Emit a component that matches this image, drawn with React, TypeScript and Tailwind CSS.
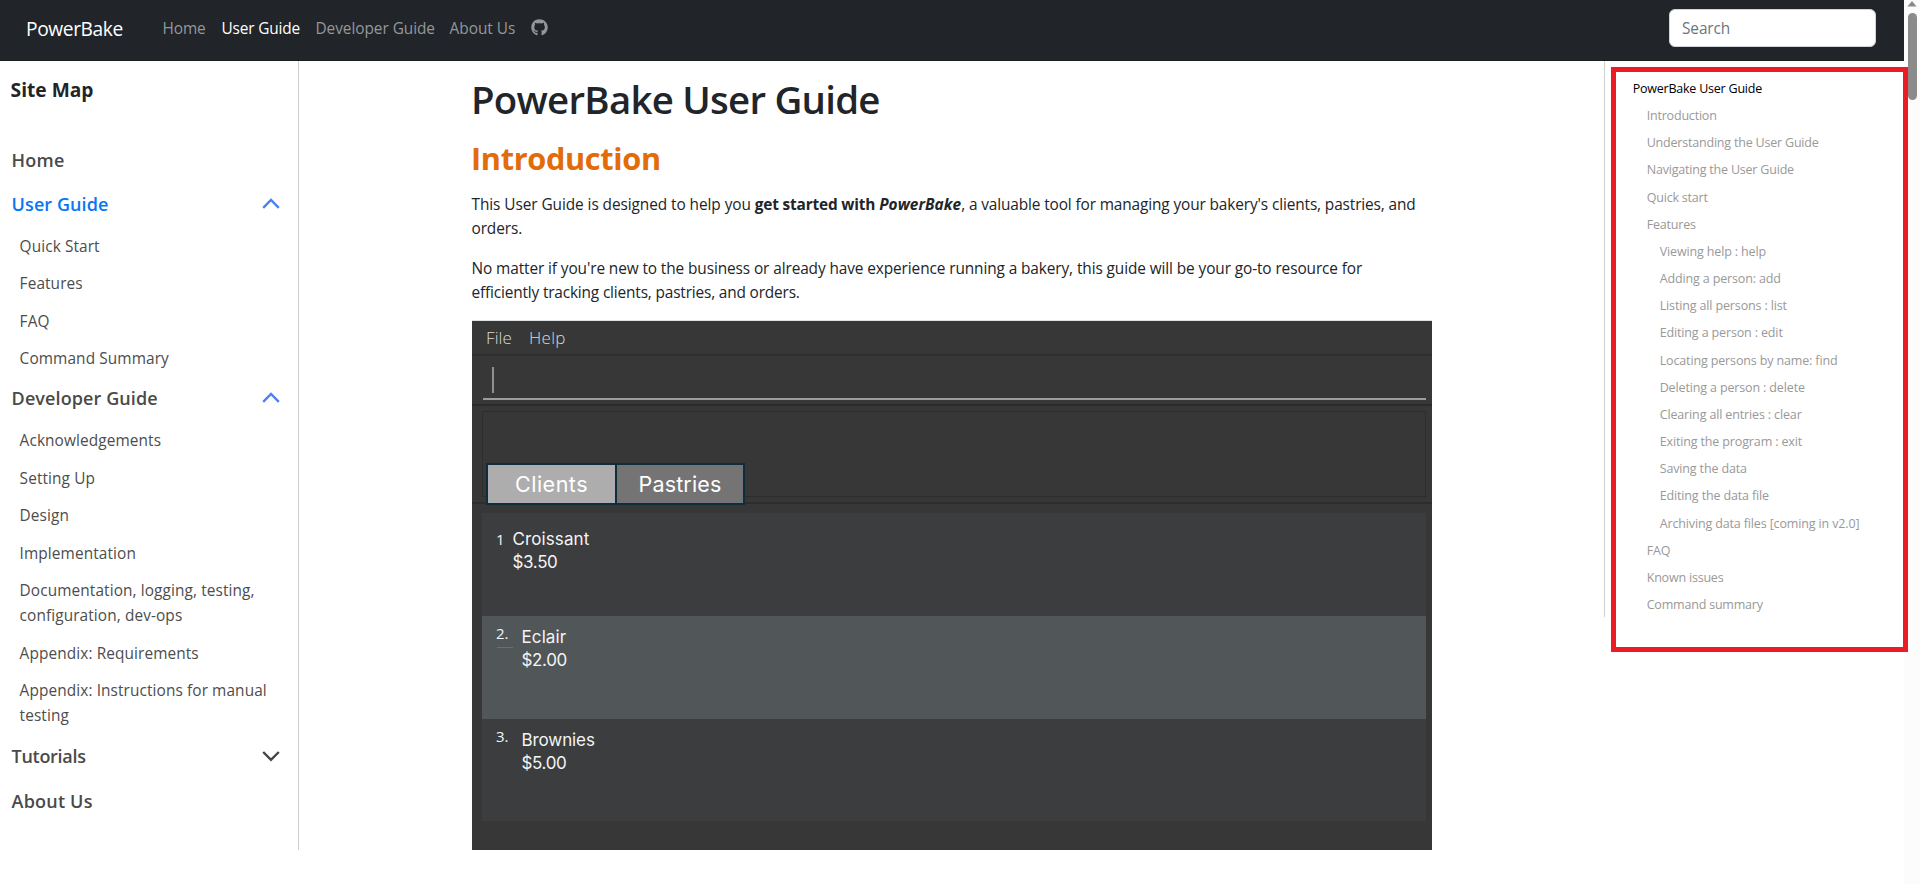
import { FaGithub } from 'react-icons/fa';

function Chevron({ open }: { open?: boolean }) {
  return (
    <svg width="18" height="12" viewBox="0 0 18 12" fill="none">
      {open ? (
        <path d="M1.2 9.8 9 2l7.8 7.8" stroke="#4a80f5" strokeWidth="2.4" />
      ) : (
        <path d="M1.2 2 9 9.8 16.8 2" stroke="#444444" strokeWidth="2.4" />
      )}
    </svg>
  );
}

function SideHeading({ label, className, open, chevron }: { label: string; className: string; open?: boolean; chevron?: boolean }) {
  return (
    <div className={`flex h-6 items-center justify-between pl-[11.6px] pr-[18.5px] text-[18px] font-semibold leading-6 ${className}`}>
      <span>{label}</span>
      {chevron && <Chevron open={open} />}
    </div>
  );
}

function SideList({ items }: { items: string[] }) {
  return (
    <ul className="mt-[17.8px] flex flex-col gap-[12.5px] pl-[19.6px] text-[15.4px] leading-[25px] tracking-[0.1px] text-[#4d4d4d]">
      {items.map((item) => (
        <li key={item} className="w-[262px] whitespace-pre-line">{item}</li>
      ))}
    </ul>
  );
}

const toc: { text: string; level: number }[] = [
  { text: 'PowerBake User Guide', level: 0 },
  { text: 'Introduction', level: 1 },
  { text: 'Understanding the User Guide', level: 1 },
  { text: 'Navigating the User Guide', level: 1 },
  { text: 'Quick start', level: 1 },
  { text: 'Features', level: 1 },
  { text: 'Viewing help : help', level: 2 },
  { text: 'Adding a person: add', level: 2 },
  { text: 'Listing all persons : list', level: 2 },
  { text: 'Editing a person : edit', level: 2 },
  { text: 'Locating persons by name: find', level: 2 },
  { text: 'Deleting a person : delete', level: 2 },
  { text: 'Clearing all entries : clear', level: 2 },
  { text: 'Exiting the program : exit', level: 2 },
  { text: 'Saving the data', level: 2 },
  { text: 'Editing the data file', level: 2 },
  { text: 'Archiving data files [coming in v2.0]', level: 2 },
  { text: 'FAQ', level: 1 },
  { text: 'Known issues', level: 1 },
  { text: 'Command summary', level: 1 },
];
const tocStyles = ['pl-0 text-black tracking-[-0.22px]', 'pl-[14px] text-[#999999] tracking-[-0.2px]', 'pl-[27px] text-[#999999] tracking-[-0.14px]'];

function AppPreview() {
  return (
    <div className="mt-[15px] h-[530px] w-[960px] border-t border-[#dfe3e3] bg-[#373737] font-[Inter,sans-serif] text-[#f4f4f4]">
      <div className="flex h-[33px] gap-[17px] pl-[14px] font-['Open_Sans',sans-serif] text-[17px] font-light leading-[34px] text-[#dadada]">
        <span className="tracking-[0.1px]">File</span>
        <span className="tracking-[0.3px]">Help</span>
      </div>
      <div className="h-[2px] bg-[#2f2f2f]" />
      <div className="ml-[11px] mr-[6px] flex h-[44px] items-start border-b-2 border-[#9c9c9c] pl-[9px] pt-[11px]">
        <div className="h-[26px] w-[2px] bg-[#8f8f8f]" />
      </div>
      <div className="mt-1 h-[2px] bg-[#2b2b2b]" />
      <div className="ml-[10px] mr-[6px] mt-[5px] h-[86px] border border-[#2d2d2d] pl-[3px] pt-[51px]">
        <div className="relative z-10 flex h-[42px] w-[259px] border-2 border-[#102d3d] text-[21.5px] leading-[38px] text-white">
          <div className="w-[129px] border-r-2 border-[#102d3d] bg-[#adadad] text-center tracking-[0.5px]">Clients</div>
          <div className="flex-1 bg-[#747474] text-center tracking-[0.15px]">Pastries</div>
        </div>
      </div>
      <div className="mt-[5px] h-[2px] bg-[#2d2d2d]" />
      <div className="ml-[10px] mr-[6px] mt-[9px] text-[17px] leading-[22.5px]">
        <div className="flex h-[103px] bg-[#3c3d3f] pl-[14px] pt-[15px]">
          <span className="w-[16.5px] font-['Open_Sans',sans-serif] text-[15px] font-medium">1</span>
          <div>
            <div className="tracking-[0.1px]">Croissant</div>
            <div className="tracking-[-0.35px]">$3.50</div>
          </div>
        </div>
        <div className="flex h-[103px] bg-[#515658] pl-[14px]">
          <div className="w-[25.5px] pt-[6px] font-['Open_Sans',sans-serif] text-[15px] font-medium leading-[23px]">
            2.
            <div className="ml-px mt-[2px] h-px w-4 bg-[#3a7f9d]" />
          </div>
          <div className="pt-[10px]">
            <div className="tracking-[0.1px]">Eclair</div>
            <div className="tracking-[-0.35px]">$2.00</div>
          </div>
        </div>
        <div className="flex h-[102px] bg-[#3c3d3f] pl-[14px]">
          <div className="w-[25.5px] pt-[6px] font-['Open_Sans',sans-serif] text-[15px] font-medium leading-[23px]">3.</div>
          <div className="pt-[10px]">
            <div className="tracking-[-0.1px]">Brownies</div>
            <div className="tracking-[-0.35px]">$5.00</div>
          </div>
        </div>
      </div>
    </div>
  );
}

export default function App() {
  return (
    <div className="relative flex h-[884px] w-[1920px] overflow-hidden bg-white font-['Open_Sans','Noto_Sans',sans-serif] text-[#212529]">
      <div className="flex w-[1904px] flex-col">
        <header className="flex h-[61px] items-start justify-between border-b border-[#1a1d20] bg-[#212529] pl-[26px] pr-[28px]">
          <nav className="flex pt-[17px] text-[15.4px] leading-6 text-[#94979a]">
            <span className="w-[136.5px] text-[19.2px] tracking-[-0.4px] text-white">PowerBake</span>
            <span className="w-[59px] tracking-[-0.1px]">Home</span>
            <span className="w-[94px] tracking-[-0.15px] text-white">User Guide</span>
            <span className="w-[134px] tracking-[-0.05px]">Developer Guide</span>
            <span className="w-[81.5px]">About Us</span>
            <FaGithub className="mt-[2px] size-[17px]" />
          </nav>
          <div className="mt-[9px] h-[38px] w-[207px] rounded-[6px] border border-[#ced4da] bg-white pl-3 text-[15.4px] leading-[37px] tracking-[-0.1px] text-[#6c757d]">
            Search
          </div>
        </header>
        <div className="flex flex-1 items-start">
          <aside className="h-[789px] w-[299px] border-r border-[#cfcfcf] pt-[17px]">
            <div className="pl-[10.6px] text-[19.2px] font-bold leading-6">Site Map</div>
            <SideHeading label="Home" className="mt-[46px] tracking-[0.2px] text-[#4a4a4a]" />
            <SideHeading label="User Guide" className="mt-5 tracking-[0.08px] text-[#0a76f2]" chevron open />
            <SideList items={['Quick Start', 'Features', 'FAQ', 'Command Summary']} />
            <SideHeading label="Developer Guide" className="mt-[15px] tracking-[0.1px] text-[#4a4a4a]" chevron open />
            <SideList
              items={[
                'Acknowledgements',
                'Setting Up',
                'Design',
                'Implementation',
                'Documentation, logging, testing,\nconfiguration, dev-ops',
                'Appendix: Requirements',
                'Appendix: Instructions for manual\ntesting',
              ]}
            />
            <SideHeading label="Tutorials" className="mt-[15.9px] tracking-[-0.3px] text-[#4a4a4a]" chevron />
            <SideHeading label="About Us" className="mt-[21px] tracking-[0.2px] text-[#4a4a4a]" />
          </aside>
          <main className="ml-[173px] w-[960px] pt-[14px]">
            <h1 className="-ml-px text-[38.4px] font-semibold leading-[48px] tracking-[-0.74px]">PowerBake User Guide</h1>
            <h2 className="-ml-px mt-4 text-[30.7px] font-bold leading-[38px] tracking-[-0.34px] text-[#e36c0a]">Introduction</h2>
            <div className="-ml-[0.5px] mt-4 whitespace-nowrap text-[15.4px] leading-6">
              <p>
                <span className="flex whitespace-pre">
                  <span className="tracking-[-0.07px]">{'This User Guide is designed to help you '}</span>
                  <b className="tracking-[-0.17px]">{'get started with '}</b>
                  <b className="italic tracking-[0.05px]">PowerBake</b>
                  <span className="tracking-[-0.12px]">{", a valuable tool for managing your bakery's clients, pastries, and"}</span>
                </span>
                <span className="block tracking-[-0.1px]">orders.</span>
              </p>
              <p className="mt-4">
                <span className="block tracking-[-0.1px]">
                  No matter if you're new to the business or already have experience running a bakery, this guide will be your go-to resource for
                </span>
                <span className="block tracking-[-0.16px]">efficiently tracking clients, pastries, and orders.</span>
              </p>
            </div>
            <AppPreview />
          </main>
          <aside className="ml-[172px] h-[556px] w-[300px] border-l border-[#cfcfcf] pl-[27.7px] pt-[14px]">
            <ul className="text-[12.5px] leading-[27.15px]">
              {toc.map(({ text, level }) => (
                <li key={text} className={tocStyles[level]}>{text}</li>
              ))}
            </ul>
          </aside>
        </div>
      </div>
      <div className="flex w-4 flex-col items-center bg-[#fcfcfc] pt-px">
        <svg width="10" height="6" viewBox="0 0 10 6" fill="#8b8b8b"><path d="M5 0 9.6 5.5H.4z" /></svg>
        <div className="mt-[6px] h-[87px] w-[9px] rounded-full bg-[#8b8b8b]" />
      </div>
      <div className="absolute left-[1611px] top-[67px] h-[585px] w-[297px] border-[5px] border-[#ed1c24]" />
    </div>
  );
}
